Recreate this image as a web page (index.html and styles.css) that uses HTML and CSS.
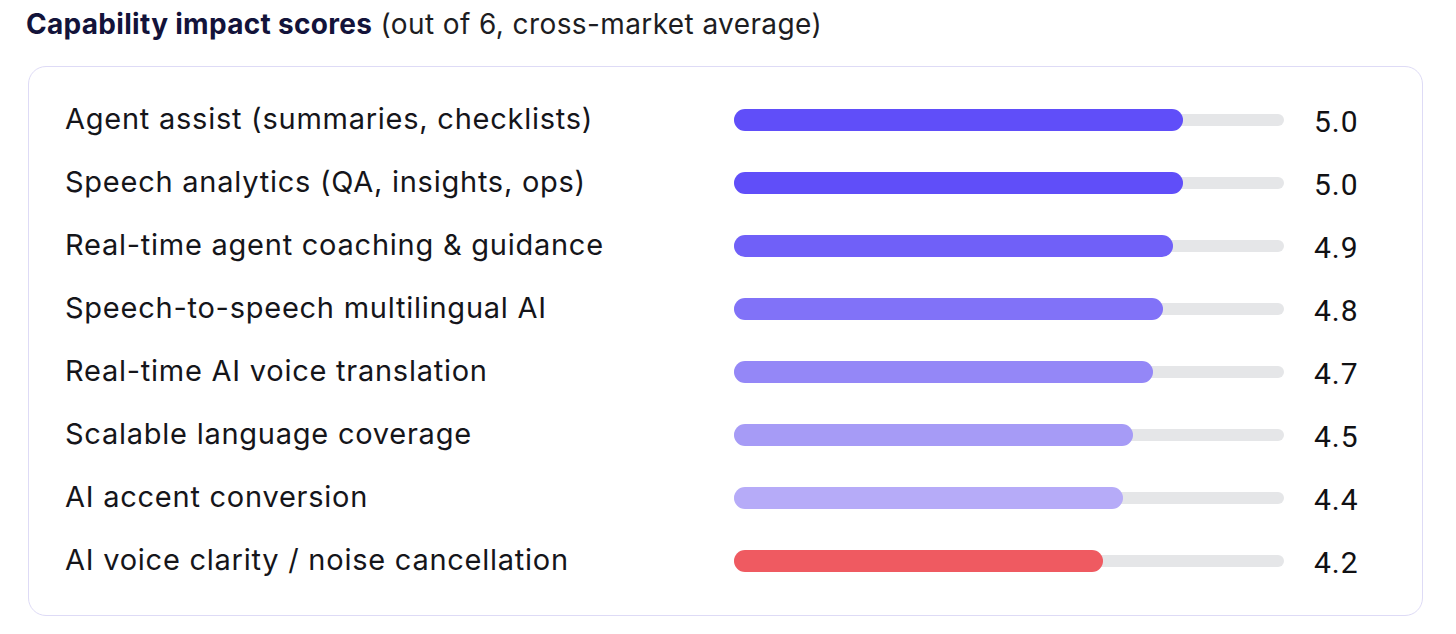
FILE: index.html
```html
<!DOCTYPE html>
<html lang="en">
<head>
<meta charset="utf-8">
<title>Capability impact scores</title>
<link rel="stylesheet" href="styles.css">
</head>
<body>
<div class="page">
  <h2 class="title"><strong>Capability impact scores</strong> <span class="sub">(out of 6, cross-market average)</span></h2>
  <div class="card">
    <div class="row">
      <div class="label">Agent assist (summaries, checklists)</div>
      <div class="track"><div class="fill c1" style="width:81.6%"></div></div>
      <div class="value">5.0</div>
    </div>
    <div class="row">
      <div class="label">Speech analytics (QA, insights, ops)</div>
      <div class="track"><div class="fill c1" style="width:81.6%"></div></div>
      <div class="value">5.0</div>
    </div>
    <div class="row">
      <div class="label">Real-time agent coaching &amp; guidance</div>
      <div class="track"><div class="fill c2" style="width:79.8%"></div></div>
      <div class="value">4.9</div>
    </div>
    <div class="row">
      <div class="label">Speech-to-speech multilingual AI</div>
      <div class="track"><div class="fill c3" style="width:78.0%"></div></div>
      <div class="value">4.8</div>
    </div>
    <div class="row">
      <div class="label">Real-time AI voice translation</div>
      <div class="track"><div class="fill c4" style="width:76.2%"></div></div>
      <div class="value">4.7</div>
    </div>
    <div class="row">
      <div class="label">Scalable language coverage</div>
      <div class="track"><div class="fill c5" style="width:72.5%"></div></div>
      <div class="value">4.5</div>
    </div>
    <div class="row">
      <div class="label">AI accent conversion</div>
      <div class="track"><div class="fill c6" style="width:70.7%"></div></div>
      <div class="value">4.4</div>
    </div>
    <div class="row">
      <div class="label">AI voice clarity / noise cancellation</div>
      <div class="track"><div class="fill c7" style="width:67.1%"></div></div>
      <div class="value">4.2</div>
    </div>
  </div>
</div>
</body>
</html>
```
FILE: styles.css
```css
html, body {
  margin: 0;
  padding: 0;
  background: #ffffff;
}

.page {
  width: 1456px;
  height: 634px;
  box-sizing: border-box;
  padding-top: 6px;
  font-family: Inter, "Noto Sans", sans-serif;
}

.title {
  margin: 0 0 0 26px;
  font-size: 28px;
  line-height: 36px;
  font-weight: 400;
  letter-spacing: 0.4px;
  color: #1b1b1f;
}

.title strong {
  font-weight: 700;
  letter-spacing: 0.3px;
  color: #13133a;
}

.sub {
  color: #1d1d22;
}

.card {
  margin: 24px 0 0 28px;
  width: 1395px;
  box-sizing: border-box;
  border: 1.5px solid #dedbf6;
  border-radius: 18px;
  padding: 21px 0 23px 36px;
}

.row {
  display: grid;
  grid-template-columns: 639px 550px auto;
  column-gap: 30px;
  align-items: center;
  height: 63px;
}

.label {
  font-size: 29px;
  letter-spacing: 0.75px;
  color: #15151a;
  white-space: nowrap;
  position: relative;
  top: -1px;
}

.track {
  position: relative;
  height: 12px;
  background: #e5e6e8;
  border-radius: 6px;
}

.fill {
  position: absolute;
  left: 0;
  top: -5px;
  height: 22px;
  border-radius: 11px;
}

.c1 { background: #604ef9; }
.c2 { background: #7060f8; }
.c3 { background: #8172f8; }
.c4 { background: #9487f7; }
.c5 { background: #a69bf6; }
.c6 { background: #b6abf8; }
.c7 { background: #ef5a61; }

.value {
  font-family: Roboto, "Liberation Sans", sans-serif;
  font-size: 30px;
  letter-spacing: 1px;
  color: #111114;
  position: relative;
  top: 2px;
}
```
